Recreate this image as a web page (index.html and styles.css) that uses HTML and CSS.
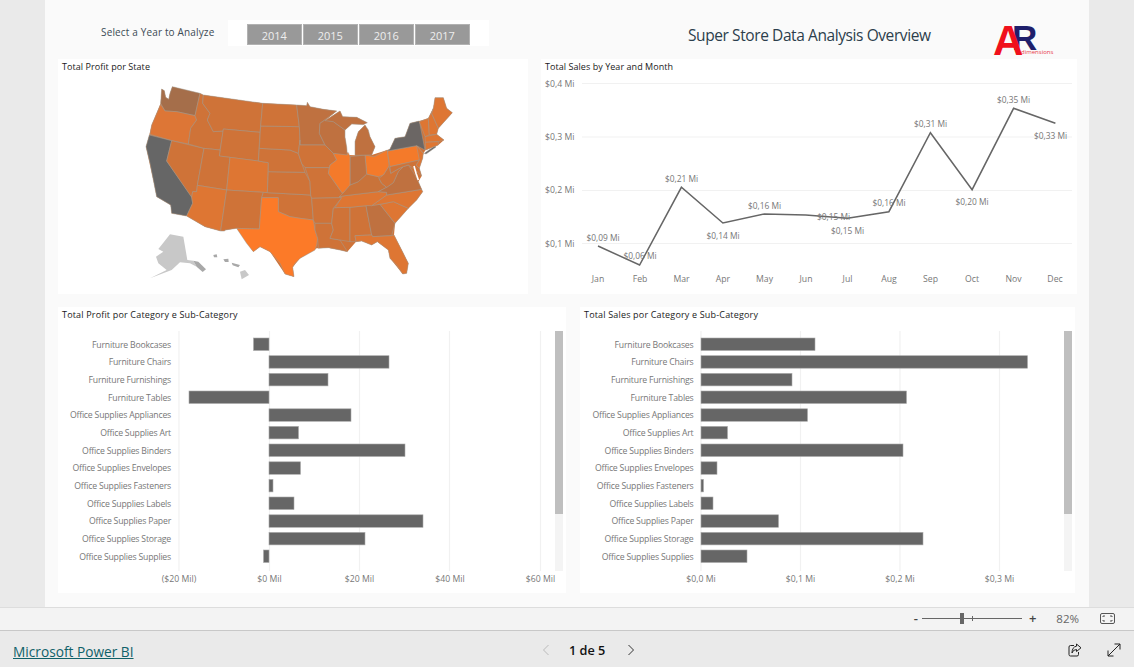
FILE: index.html
```html
<!DOCTYPE html>
<html lang="en">
<head>
<meta charset="utf-8">
<title>Super Store Data Analysis Overview</title>
<link rel="stylesheet" href="styles.css">
</head>
<body>
<main class="stage">
  <div class="canvas">
    <header class="head">
      <div class="year-label">Select a Year to Analyze</div>
      <div class="slicer">
        <button class="year">2014</button>
        <button class="year">2015</button>
        <button class="year">2016</button>
        <button class="year">2017</button>
      </div>
      <h1 class="title">Super Store Data Analysis Overview</h1>
      <svg class="logo" width="64" height="52" viewBox="0 0 64 52">
        <text class="logo-r" x="19" y="36">R</text>
        <text class="logo-a" x="0" y="41">A</text>
        <text class="logo-d" x="28" y="40">dimensions</text>
      </svg>
    </header>

    <div class="row row-top">
      <section class="panel panel-map">
        <h2 class="panel-title">Total Profit por State</h2>
        <svg class="chart" width="470" height="220" viewBox="24 222 1410 660">
          <path class="land" d="M335 267L343 272L347 292L356 298L360 280L367 260L460 285L638 310L740 315L770 317L772 307L780 320L820 328L860 333L825 362L870 333L878 350L920 352L952 368L905 372L885 390L885 412L892 465L915 466L915 425L925 395L945 375L960 410L975 440L965 465L1012 450L1020 447L1035 415L1065 410L1080 370L1108 363L1135 355L1150 325L1155 293L1180 293L1190 325L1207 338L1165 385L1160 403L1182 420L1165 435L1127 450L1120 460L1118 475L1108 505L1115 528L1105 545L1118 575L1100 600L1075 625L1035 670L1032 705L1060 760L1075 790L1070 820L1058 822L1020 775L1015 750L982 725L965 735L935 723L918 725L892 755L870 750L835 743L800 745L750 775L728 802L732 830L705 822L660 755L630 740L610 755L560 685L512 693L465 680L410 648L365 640L362 615L320 590L312 550L288 440L298 405L305 375L332 310Z"/>
          <g class="states">
            <path class="s-wa" d="M335 267L343 272L347 292L356 298L360 280L367 260L450 280L435 347L380 335L345 333L332 310Z"/>
            <path class="s-or" d="M332 313L345 333L380 335L435 347L440 360L422 385L415 432L365 422L300 403L305 375Z"/>
            <path class="s-ca" d="M298 405L365 422L350 483L425 590L428 610L410 648L365 640L362 615L320 590L312 550L300 490L288 440Z"/>
            <path class="s-mid" d="M365 422L462 445L442 556L440 575L428 575L425 592L350 483Z"/>
            <path class="s-mid" d="M450 280L460 285L458 310L480 340L472 360L490 395L520 393L510 450L462 445L415 432L422 385L440 360L435 347Z"/>
            <path class="s-mid" d="M460 285L638 310L632 378L630 397L520 387L520 393L490 395L472 360L480 340L458 310Z"/>
            <path class="s-mid" d="M520 387L630 397L625 483L508 468Z"/>
            <path class="s-mid" d="M462 445L510 450L508 468L540 472L530 570L442 556Z"/>
            <path class="s-lit" d="M540 472L625 483L655 488L652 578L530 570Z"/>
            <path class="s-lit" d="M442 556L530 570L512 693L465 680L410 648L428 610L425 592L428 575L440 575Z"/>
            <path class="s-mid" d="M530 570L640 577L635 593L628 687L560 685L525 690L524 693L512 693Z"/>
            <path class="s-mid" d="M652 578L782 585L785 595L790 660L750 655L720 650L685 635L685 593L635 593L640 577Z"/>
            <path class="s-tx" d="M635 593L685 593L685 635L720 650L750 655L790 660L795 690L803 715L800 735L795 750L750 775L735 790L728 802L732 830L705 822L690 790L660 755L630 740L610 755L590 730L560 685L628 687Z"/>
            <path class="s-mid" d="M655 515L765 517L780 545L782 585L652 578Z"/>
            <path class="s-mid" d="M628 445L720 450L745 460L755 490L765 517L655 515L655 488L625 483Z"/>
            <path class="s-mid" d="M632 378L748 380L750 420L745 460L720 450L628 445Z"/>
            <path class="s-mid" d="M638 310L740 315L748 380L632 378Z"/>
            <path class="s-brn" d="M740 315L770 317L772 307L780 320L820 328L860 333L810 370L808 400L825 435L750 435L750 420L748 380Z"/>
            <path class="s-mid" d="M750 435L825 435L850 460L860 480L840 495L838 503L765 503L755 490L745 460L750 420Z"/>
            <path class="s-mid" d="M765 503L838 503L835 520L870 570L878 580L875 593L785 595L782 585L780 545Z"/>
            <path class="s-mid" d="M785 595L875 593L850 625L845 670L795 670L790 660Z"/>
            <path class="s-mid" d="M795 670L845 670L850 690L840 715L870 720L892 755L870 750L835 743L805 745L803 715L795 690Z"/>
            <path class="s-mid" d="M855 623L900 622L900 725L870 720L840 715L850 690L845 670L850 625Z"/>
            <path class="s-mid" d="M900 622L948 617L965 705L915 707L918 725L900 725Z"/>
            <path class="s-brn" d="M948 617L990 613L1035 670L1025 707L968 710L965 705Z"/>
            <path class="s-lit" d="M915 707L965 705L968 710L1025 707L1032 705L1060 760L1075 790L1070 820L1058 822L1040 795L1020 775L1015 750L982 725L965 735L935 723L918 725Z"/>
            <path class="s-lit" d="M990 613L1030 605L1075 625L1035 670Z"/>
            <path class="s-lit" d="M965 617L1010 585L1115 568L1118 575L1100 600L1075 625L1030 605L990 613Z"/>
            <path class="s-lit" d="M868 590L885 587L985 575L1010 577L1010 585L965 617L948 617L900 622L855 623L875 593Z"/>
            <path class="s-ky" d="M878 580L900 555L925 545L950 522L985 530L987 535L995 550L1010 562L985 575L885 587L868 590Z"/>
            <path class="s-brn" d="M985 575L1010 562L1030 548L1045 515L1060 500L1075 495L1095 525L1105 545L1115 568L1010 585L1010 577Z"/>
            <path class="s-mid" d="M1000 525L1017 498L1022 520L1048 505L1060 500L1045 515L1030 548L1010 562L995 550L987 535Z"/>
            <path class="s-oh" d="M945 465L972 470L1012 450L1017 498L1000 525L985 530L950 522Z"/>
            <path class="s-brn" d="M900 470L945 465L950 522L925 545L900 555Z"/>
            <path class="s-oh" d="M850 460L895 458L900 470L900 555L878 580L870 570L835 520L840 495L860 480Z"/>
            <path class="s-brn" d="M810 370L825 360L850 365L885 390L885 412L890 440L892 465L850 460L825 435L808 400Z"/>
            <path class="s-brn" d="M915 466L915 425L925 395L945 375L955 390L960 410L975 440L965 465Z"/>
            <path class="s-brn" d="M825 362L870 333L878 350L920 352L952 368L940 374L905 372L885 390L850 365Z"/>
            <path class="s-oh" d="M1012 453L1100 437L1120 460L1108 480L1020 500Z"/>
            <path class="s-ny" d="M1020 447L1035 415L1065 410L1080 370L1108 363L1125 450L1100 437L1012 453Z"/>
            <path class="s-ny" d="M1123 460L1155 437L1158 441L1128 462Z"/>
            <path class="s-lit" d="M1100 437L1120 460L1118 475L1108 505L1098 495L1108 480Z"/>
            <path class="s-mid" d="M1020 500L1108 480L1098 495L1108 505L1115 528L1098 512L1090 505L1075 495L1060 500L1048 505L1022 520Z"/>
            <path class="s-lit" d="M1108 365L1135 355L1138 405L1125 410Z"/>
            <path class="s-lit" d="M1135 355L1150 325L1145 340L1165 385L1160 403L1138 405Z"/>
            <path class="s-lit" d="M1150 325L1155 293L1180 293L1190 325L1207 338L1165 385L1145 340Z"/>
            <path class="s-lit" d="M1125 410L1160 403L1182 420L1165 425L1126 427Z"/>
            <path class="s-lit" d="M1126 427L1165 425L1165 435L1127 450Z"/>
          </g>
          <path class="bay" d="M1092 498L1098 520L1105 540"/>
          <g class="ak">
            <path d="M340 728L360 703L400 710L412 780L430 782L440 800L420 790L390 787L365 810L300 835L350 810L325 790L318 770L340 755L325 747Z"/>
            <path class="ak-dark" d="M430 782L445 785L468 808L458 816L440 800Z"/>
            <path d="M570 815L585 810L597 825L575 838Z"/>
            <path class="ak-dark" d="M490 765L500 763L502 772L492 772ZM520 778L535 776L536 786L525 786ZM545 788L570 795L565 802L548 796Z"/>
          </g>
        </svg>
      </section>

      <section class="panel panel-line">
        <h2 class="panel-title">Total Sales by Year and Month</h2>
        <svg class="chart" width="536" height="220" viewBox="541 74 536 220">
          <g class="grid">
            <line x1="582" x2="1072" y1="83.5" y2="83.5"/>
            <line x1="582" x2="1072" y1="137" y2="137"/>
            <line x1="582" x2="1072" y1="190.5" y2="190.5"/>
            <line x1="582" x2="1072" y1="243.5" y2="243.5"/>
          </g>
          <g class="tick">
            <text x="545" y="83.5">$0,4 Mi</text>
            <text x="545" y="136.5">$0,3 Mi</text>
            <text x="545" y="189.5">$0,2 Mi</text>
            <text x="545" y="243.5">$0,1 Mi</text>
          </g>
          <polyline class="trend" points="598,246 639.6,265 681.4,187.3 722.9,223 764.3,214 805.7,215 847.5,218.3 888.9,211.7 930.4,132.7 972.1,189.7 1013.6,108.3 1055.4,123.3"/>
          <g class="tick mid">
            <text x="598" y="278.5">Jan</text>
            <text x="640" y="278.5">Feb</text>
            <text x="681.5" y="278.5">Mar</text>
            <text x="723" y="278.5">Apr</text>
            <text x="764.5" y="278.5">May</text>
            <text x="806" y="278.5">Jun</text>
            <text x="847.5" y="278.5">Jul</text>
            <text x="889" y="278.5">Aug</text>
            <text x="930.5" y="278.5">Sep</text>
            <text x="972" y="278.5">Oct</text>
            <text x="1013.5" y="278.5">Nov</text>
            <text x="1055" y="278.5">Dec</text>
          </g>
          <g class="point mid">
            <text x="603" y="237">$0,09 Mi</text>
            <text x="640" y="255">$0,06 Mi</text>
            <text x="681.5" y="178">$0,21 Mi</text>
            <text x="723" y="235">$0,14 Mi</text>
            <text x="764.5" y="205">$0,16 Mi</text>
            <text x="833.5" y="216">$0,15 Mi</text>
            <text x="847.5" y="230">$0,15 Mi</text>
            <text x="889" y="202">$0,16 Mi</text>
            <text x="930.5" y="123">$0,31 Mi</text>
            <text x="972" y="201">$0,20 Mi</text>
            <text x="1013.5" y="99">$0,35 Mi</text>
            <text x="1050.5" y="135">$0,33 Mi</text>
          </g>
        </svg>
      </section>
    </div>

    <div class="row row-bottom">
      <section class="panel panel-profit">
        <h2 class="panel-title">Total Profit por Category e Sub-Category</h2>
        <svg class="chart" width="508" height="271" viewBox="58 322 508 271">
          <g class="grid">
            <line x1="179" x2="179" y1="331" y2="571"/>
            <line x1="269.5" x2="269.5" y1="331" y2="571"/>
            <line x1="359.5" x2="359.5" y1="331" y2="571"/>
            <line x1="449.5" x2="449.5" y1="331" y2="571"/>
            <line x1="540.5" x2="540.5" y1="331" y2="571"/>
          </g>
          <g class="tick end">
            <text x="171" y="344.5">Furniture Bookcases</text>
            <text x="171" y="362">Furniture Chairs</text>
            <text x="171" y="379.7">Furniture Furnishings</text>
            <text x="171" y="397.5">Furniture Tables</text>
            <text x="171" y="415">Office Supplies Appliances</text>
            <text x="171" y="432.7">Office Supplies Art</text>
            <text x="171" y="450.5">Office Supplies Binders</text>
            <text x="171" y="468">Office Supplies Envelopes</text>
            <text x="171" y="485.7">Office Supplies Fasteners</text>
            <text x="171" y="503.5">Office Supplies Labels</text>
            <text x="171" y="521">Office Supplies Paper</text>
            <text x="171" y="538.7">Office Supplies Storage</text>
            <text x="171" y="556.5">Office Supplies Supplies</text>
          </g>
          <g class="bars">
            <rect x="253.5" y="338" width="15.5" height="12.5"/>
            <rect x="269" y="355.7" width="120" height="12.5"/>
            <rect x="269" y="373.4" width="59" height="12.5"/>
            <rect x="189" y="391" width="80" height="12.5"/>
            <rect x="269" y="408.8" width="82" height="12.5"/>
            <rect x="269" y="426.4" width="29.5" height="12.5"/>
            <rect x="269" y="444" width="136" height="12.5"/>
            <rect x="269" y="461.8" width="31.5" height="12.5"/>
            <rect x="269" y="479.4" width="4" height="12.5"/>
            <rect x="269" y="497" width="25" height="12.5"/>
            <rect x="269" y="514.8" width="154" height="12.5"/>
            <rect x="269" y="532.4" width="96" height="12.5"/>
            <rect x="263.5" y="550" width="5.5" height="12.5"/>
          </g>
          <g class="tick mid">
            <text x="179" y="578.5">($20 Mil)</text>
            <text x="269.5" y="578.5">$0 Mil</text>
            <text x="359.5" y="578.5">$20 Mil</text>
            <text x="450" y="578.5">$40 Mil</text>
            <text x="540.5" y="578.5">$60 Mil</text>
          </g>
          <rect class="track" x="555" y="514" width="8" height="57"/>
          <rect class="thumb" x="555" y="331" width="8" height="183"/>
        </svg>
      </section>

      <section class="panel panel-sales">
        <h2 class="panel-title">Total Sales por Category e Sub-Category</h2>
        <svg class="chart" width="495" height="271" viewBox="580 322 495 271">
          <g class="grid">
            <line x1="701" x2="701" y1="331" y2="571"/>
            <line x1="800.5" x2="800.5" y1="331" y2="571"/>
            <line x1="900" x2="900" y1="331" y2="571"/>
            <line x1="999.5" x2="999.5" y1="331" y2="571"/>
          </g>
          <g class="tick end">
            <text x="693.5" y="344.5">Furniture Bookcases</text>
            <text x="693.5" y="362">Furniture Chairs</text>
            <text x="693.5" y="379.7">Furniture Furnishings</text>
            <text x="693.5" y="397.5">Furniture Tables</text>
            <text x="693.5" y="415">Office Supplies Appliances</text>
            <text x="693.5" y="432.7">Office Supplies Art</text>
            <text x="693.5" y="450.5">Office Supplies Binders</text>
            <text x="693.5" y="468">Office Supplies Envelopes</text>
            <text x="693.5" y="485.7">Office Supplies Fasteners</text>
            <text x="693.5" y="503.5">Office Supplies Labels</text>
            <text x="693.5" y="521">Office Supplies Paper</text>
            <text x="693.5" y="538.7">Office Supplies Storage</text>
            <text x="693.5" y="556.5">Office Supplies Supplies</text>
          </g>
          <g class="bars">
            <rect x="701" y="338" width="114" height="12.5"/>
            <rect x="701" y="355.7" width="326.5" height="12.5"/>
            <rect x="701" y="373.4" width="91" height="12.5"/>
            <rect x="701" y="391" width="205.5" height="12.5"/>
            <rect x="701" y="408.8" width="106.5" height="12.5"/>
            <rect x="701" y="426.4" width="26.5" height="12.5"/>
            <rect x="701" y="444" width="202" height="12.5"/>
            <rect x="701" y="461.8" width="16" height="12.5"/>
            <rect x="701" y="479.4" width="2.5" height="12.5"/>
            <rect x="701" y="497" width="12" height="12.5"/>
            <rect x="701" y="514.8" width="77.5" height="12.5"/>
            <rect x="701" y="532.4" width="222" height="12.5"/>
            <rect x="701" y="550" width="46" height="12.5"/>
          </g>
          <g class="tick mid">
            <text x="701" y="578.5">$0,0 Mi</text>
            <text x="800.5" y="578.5">$0,1 Mi</text>
            <text x="900" y="578.5">$0,2 Mi</text>
            <text x="999.5" y="578.5">$0,3 Mi</text>
          </g>
          <rect class="track" x="1064" y="514" width="8" height="57"/>
          <rect class="thumb" x="1064" y="331" width="8" height="183"/>
        </svg>
      </section>
    </div>
  </div>
</main>

<div class="zoombar">
  <span class="zoom-sign zoom-minus">-</span>
  <div class="slider"><span class="slider-tick"></span><span class="slider-thumb"></span></div>
  <span class="zoom-sign zoom-plus">+</span>
  <span class="zoom-value">82%</span>
  <svg class="fit" width="15" height="11" viewBox="0 0 15 11">
    <rect x="0.5" y="0.5" width="14" height="10" rx="1.5"/>
    <path d="M3 4V3H5M10 3H12V4M12 7V8H10M5 8H3V7"/>
  </svg>
</div>

<footer class="footer">
  <a class="brand" href="#">Microsoft Power BI</a>
  <nav class="pager">
    <svg class="chev chev-off" width="8" height="12" viewBox="0 0 8 12"><path d="M6.5 1L1.5 6L6.5 11"/></svg>
    <span class="page-count">1 de 5</span>
    <svg class="chev" width="8" height="12" viewBox="0 0 8 12"><path d="M1.5 1L6.5 6L1.5 11"/></svg>
  </nav>
  <div class="actions">
    <svg class="act" width="14" height="14" viewBox="0 0 14 14">
      <path d="M6 2.5H2.5Q1 2.5 1 4V11.5Q1 13 2.5 13H9Q10.5 13 10.5 11.5V9"/>
      <path d="M8.5 1L13 4.8L8.5 8.5V6.5Q5 6.5 4 10Q4 4 8.5 3.2Z"/>
    </svg>
    <svg class="act" width="14" height="14" viewBox="0 0 14 14">
      <path d="M1 13L13 1M7.5 1H13V6.5M1 7.5V13H6.5"/>
    </svg>
  </div>
</footer>
</body>
</html>
```

FILE: styles.css
```css
* { box-sizing: border-box; }

html, body {
  margin: 0;
  padding: 0;
  height: 667px;
  overflow: hidden;
}

body {
  display: flex;
  flex-direction: column;
  background: #eaeaea;
  font-family: "Open Sans", "Noto Sans", sans-serif;
}

.stage {
  height: 607px;
  padding-left: 45px;
  flex: none;
}

.canvas {
  width: 1044px;
  height: 607px;
  padding-left: 13px;
  background: #fafafa;
}

.head {
  display: flex;
  align-items: flex-start;
  height: 59px;
}

.year-label {
  width: 127px;
  margin-left: 43px;
  padding-top: 24px;
  font-size: 10px;
  line-height: 16px;
  letter-spacing: 0.15px;
  color: #3c4a55;
  white-space: nowrap;
}

.slicer {
  display: flex;
  gap: 1.5px;
  width: 261px;
  height: 26px;
  margin-top: 20px;
  padding: 4px 0 0 19px;
  background: #fff;
}

.year {
  width: 54.5px;
  height: 21px;
  padding: 2px 0 0;
  border: 1px solid #b2b2b2;
  background: #999;
  color: #eee;
  font: 11px/18px "Open Sans", sans-serif;
}

.title {
  flex: none;
  width: 243px;
  margin: 25px 0 0 199px;
  font-size: 15.5px;
  font-weight: 400;
  line-height: 21px;
  letter-spacing: -0.41px;
  color: #2c3e4c;
  white-space: nowrap;
}

.logo {
  margin: 14px 0 0 62px;
  flex: none;
}

.logo-a {
  font: 700 42px "Liberation Sans", sans-serif;
  fill: #f0101c;
}

.logo-r {
  font: 700 35px "Liberation Sans", sans-serif;
  fill: #1f1f6b;
}

.logo-d {
  font: 6px "Open Sans", sans-serif;
  fill: #e8404a;
}

.row {
  display: flex;
}

.row-top {
  gap: 13px;
  height: 235px;
  margin-bottom: 13px;
}

.row-bottom {
  gap: 14px;
  height: 286px;
}

.panel {
  background: #fff;
}

.panel-map { width: 470px; }
.panel-line { width: 536px; }
.panel-profit { width: 508px; }
.panel-sales { width: 495px; }

.panel-title {
  height: 15px;
  margin: 0;
  padding-left: 4px;
  font-size: 9px;
  font-weight: 400;
  line-height: 15px;
  letter-spacing: 0.05px;
  color: #1a1a1a;
  white-space: nowrap;
}

.panel-profit .panel-title,
.panel-sales .panel-title {
  letter-spacing: 0.17px;
}

.chart {
  display: block;
}

.land { fill: #cf7338; }

.states path {
  stroke: #a39a90;
  stroke-width: 1.6;
  stroke-linejoin: round;
}

.s-wa { fill: #a56e4a; }
.s-or { fill: #dd7636; }
.s-ca { fill: #666; }
.s-ny { fill: #6b6664; }
.s-mid { fill: #cf7338; }
.s-ky { fill: #c9733a; }
.s-lit { fill: #de7633; }
.s-brn { fill: #bf7140; }
.s-oh { fill: #f47a2a; }
.s-tx { fill: #fc7a28; }

.bay {
  fill: none;
  stroke: #fff;
  stroke-width: 5;
}

.ak path { fill: #c8c8c8; }
.ak .ak-dark { fill: #a8a8a8; }

.grid line {
  stroke: #f1f1f1;
  stroke-width: 1.2;
}

.tick text,
.point text {
  dominant-baseline: central;
  fill: #777;
  font-size: 8.7px;
}

.point text {
  font-size: 8.4px;
}

.mid text { text-anchor: middle; }

.end text {
  text-anchor: end;
  letter-spacing: -0.2px;
}

.trend {
  fill: none;
  stroke: #666;
  stroke-width: 1.5;
}

.bars rect {
  fill: #666;
  stroke: #aaa;
  stroke-width: 0.6;
}

.thumb { fill: #bfbfbf; }
.track { fill: #f4f4f4; }

.zoombar {
  display: flex;
  align-items: center;
  justify-content: flex-end;
  flex: none;
  height: 24px;
  padding: 0 19px 2px 0;
  background: #f3f3f3;
  border-top: 1px solid #ddd;
  border-bottom: 1px solid #c8c8c8;
}

.zoom-sign {
  font-size: 13px;
  font-weight: 600;
  line-height: 16px;
  color: #444;
}

.slider {
  position: relative;
  width: 100px;
  height: 1px;
  margin: 0 7px 0 4px;
  background: #666;
}

.slider-thumb {
  position: absolute;
  left: 38px;
  top: -5px;
  width: 4px;
  height: 11px;
  background: #666;
}

.slider-tick {
  position: absolute;
  left: 50px;
  top: -2px;
  width: 1px;
  height: 5px;
  background: #666;
}

.zoom-value {
  margin-left: 20px;
  font-size: 11.5px;
  color: #666;
}

.fit {
  margin-left: 21px;
  fill: none;
  stroke: #555;
}

.footer {
  display: flex;
  align-items: center;
  flex: 1;
  padding: 2px 13px 0 13px;
}

.brand {
  width: 120px;
  margin: 2px 409px 0 0;
  font-size: 13.7px;
  font-weight: 500;
  color: #0f6169;
  white-space: nowrap;
}

.pager {
  display: flex;
  align-items: center;
}

.chev {
  fill: none;
  stroke: #333;
  stroke-width: 1;
}

.chev-off { stroke: #bbb; }

.page-count {
  margin: 0 22px 0 19px;
  font-size: 12.7px;
  font-weight: 600;
  color: #111;
  white-space: nowrap;
}

.actions {
  display: flex;
  gap: 25px;
  margin-left: auto;
}

.act {
  fill: none;
  stroke: #222;
  stroke-width: 1;
}
```
